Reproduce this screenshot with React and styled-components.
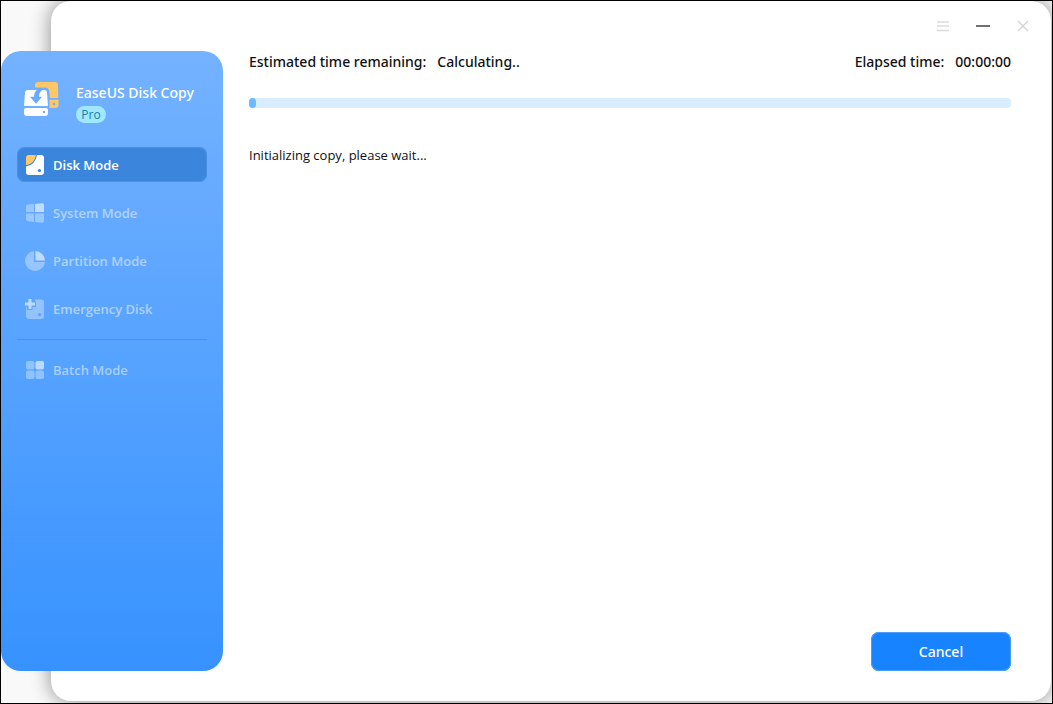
import React from "react";
import styled, { createGlobalStyle } from "styled-components";

const GlobalStyle = createGlobalStyle`
  * { box-sizing: border-box; }
  body { margin: 0; font-family: "Open Sans", "Noto Sans", sans-serif; color: #111; }
  button { font-family: inherit; border: 0; padding: 0; background: none; cursor: pointer; }
`;

const headingFont = `"Noto Sans", "Open Sans", sans-serif`;

const Desktop = styled.div`
  display: flex;
  min-height: 100vh;
  padding: 0 1px 2px 0;
  border: 1px solid #000;
  background: #f9f9f9;
  overflow: hidden;
`;

const Sidebar = styled.aside`
  position: relative;
  z-index: 1;
  flex: none;
  width: 222px;
  margin: 50px -172px 30px 0;
  padding: 30px 16px;
  border-radius: 20px;
  background: linear-gradient(#74b2ff, #3792ff);
`;

const Brand = styled.header`
  display: flex;
  gap: 16px;
  height: 66px;
  padding-left: 6px;
`;

const BrandText = styled.div`
  display: flex;
  flex-direction: column;
  align-items: flex-start;
  gap: 3px;
  padding-top: 2px;
`;

const BrandName = styled.h1`
  margin: 0;
  color: #fff;
  font-family: ${headingFont};
  font-size: 14px;
  font-weight: 500;
  line-height: 20px;
  white-space: nowrap;
`;

const Badge = styled.span`
  width: 30px;
  border-radius: 9px;
  background: #a0e8ff;
  color: #1a80aa;
  font-size: 12px;
  line-height: 17px;
  text-align: center;
`;

const Nav = styled.nav`
  display: flex;
  flex-direction: column;
  gap: 13px;
`;

const NavItem = styled.button`
  display: flex;
  align-items: center;
  gap: 7px;
  height: 35px;
  padding: 0 7px;
  border-radius: 8px;
  font-size: 13px;
  font-weight: 600;
  line-height: 18px;
  white-space: nowrap;
  color: ${(p) => (p.$active ? "#fff" : "rgba(255,255,255,0.5)")};
  background: ${(p) => (p.$active ? "#3b86dc" : "transparent")};
  box-shadow: ${(p) => (p.$active ? "inset 0 0 0 1px #4a91e6" : "none")};
`;

const Divider = styled.hr`
  width: 100%;
  height: 1px;
  margin: 0 0 -1px;
  border: 0;
  background: #4692ee;
`;

const Panel = styled.main`
  display: flex;
  flex: 1;
  flex-direction: column;
  min-width: 0;
  padding: 15px 40px 30px 198px;
  border-radius: 20px;
  background: #fff;
  box-shadow: 0 0 20px rgba(0, 0, 0, 0.45);
`;

const WindowBar = styled.div`
  display: flex;
  justify-content: flex-end;
  gap: 20px;
  margin-right: -22px;
`;

const WindowButton = styled.button`
  display: flex;
  width: 20px;
  height: 20px;
`;

const Times = styled.div`
  display: flex;
  justify-content: space-between;
  margin-top: 16px;
`;

const Time = styled.p`
  display: flex;
  gap: 11px;
  margin: 0;
  font-family: ${headingFont};
  font-size: 14px;
  font-weight: 500;
  line-height: 20px;
  white-space: nowrap;
`;

const Track = styled.div`
  height: 10px;
  margin-top: 26px;
  border-radius: 4px;
  background: #d9edff;
`;

const Fill = styled.div`
  height: 100%;
  min-width: 7px;
  border-radius: 4px;
  background: #6bb9ff;
`;

const Status = styled.p`
  margin: 37px 0 0;
  font-size: 13px;
  line-height: 20px;
`;

const Footer = styled.footer`
  display: flex;
  justify-content: flex-end;
  margin-top: auto;
`;

const CancelButton = styled.button`
  width: 140px;
  height: 39px;
  border-radius: 8px;
  box-shadow: inset 0 0 0 1px #4b9eff;
  background: #1783ff;
  color: #fff;
  font-family: ${headingFont};
  font-size: 14px;
  font-weight: 500;
`;

const Logo = () => (
  <svg width="37" height="36" viewBox="0 0 37 36" aria-hidden="true">
    <path fill="#ffc766" d="M15 1h17q3 0 3 3l.3 13H27l-.8-7q-.4-3.500-4-3.500H12V4q0-3 3-3z" />
    <path fill="#ffc766" fillRule="evenodd" d="M26.500 18.700h9V24q0 3-3 3h-6zM31 21.700a1.300 1.300 0 1 0 0 2.600a1.300 1.300 0 0 0 0-2.600z" />
    <path fill="#fff" d="M5 9h16q3 0 3 3l1 13H1l1-13q0-3 3-3z" />
    <path fill="#69acff" d="M23 7.500q-7 1.500-7 8.300h3l-6 7-6-7h4q0-6 5-8.300z" />
    <path fill="#fff" fillRule="evenodd" d="M3 27h20q2 0 2 2v3q0 3-3 3H4q-3 0-3-3v-3q0-2 2-2zM21 29.700a1.300 1.300 0 1 0 0 2.600a1.300 1.300 0 0 0 0-2.600z" />
  </svg>
);

const NavIcon = ({ children }) => (
  <svg width="22" height="22" viewBox="0 0 22 22" fill="#fff" aria-hidden="true">{children}</svg>
);

const DiskIcon = () => (
  <NavIcon>
    <path d="M13 1h4q3 0 3 3v14q0 3-3 3H5q-3 0-3-3v-5.500Q11.500 11 13 1z" />
    <path fill="#ffc766" d="M5 1h7Q10.500 10 2 11.300V4q0-3 3-3z" />
    <circle cx="15.500" cy="16.500" r="1.600" fill="#3b86dc" />
  </NavIcon>
);

const SystemIcon = () => (
  <NavIcon>
    <g opacity=".35">
      <path d="M4 2.600L10 2v8H2V4.500q0-1.700 2-1.900z" />
      <path d="M2 11.500h8v8.500l-6-.8q-2-.3-2-2z" />
      <path d="M11 11.500h9V19q0 2-2 1.800l-7-.8z" />
    </g>
    <path opacity=".6" d="M11 1.900L18 1.200q2-.2 2 1.800v7h-9z" />
  </NavIcon>
);

const PartitionIcon = () => (
  <NavIcon>
    <path opacity=".35" d="M10 1v11h11A10 10 0 1 1 10 1z" />
    <path opacity=".6" d="M11.500 1A10 10 0 0 1 21 10.500h-9.500z" />
  </NavIcon>
);

const EmergencyIcon = () => (
  <NavIcon>
    <path opacity=".35" fillRule="evenodd" d="M11 1.500h6q3 0 3 3V18q0 3-3 3H5q-3 0-3-3v-8.500h1v2.500h5.500V9h3.500V3.500h-1zM15.500 15a1.600 1.600 0 1 0 0 3.200a1.600 1.600 0 0 0 0-3.200z" />
    <path opacity=".6" d="M4.500 1h3v3.500H11v3H7.500V11h-3V7.500H1v-3h3.500z" />
  </NavIcon>
);

const BatchIcon = () => (
  <NavIcon>
    <g opacity=".35">
      <rect x="2" y="2" width="8.500" height="8.500" rx="1.800" />
      <rect x="2" y="11.500" width="8.500" height="8.500" rx="1.800" />
      <rect x="11.500" y="11.500" width="8.500" height="8.500" rx="1.800" />
    </g>
    <rect opacity=".6" x="11.500" y="2" width="8.500" height="8.500" rx="1.800" />
  </NavIcon>
);

const modes = [
  { name: "Disk Mode", Icon: DiskIcon, active: true },
  { name: "System Mode", Icon: SystemIcon },
  { name: "Partition Mode", Icon: PartitionIcon },
  { name: "Emergency Disk", Icon: EmergencyIcon },
];

const windowButtons = [
  { label: "Menu", path: "M4 6h12M4 10h12M4 14.500h12", color: "#dbdbdb", width: 1.6 },
  { label: "Minimize", path: "M3 10h14", color: "#707072", width: 2 },
  { label: "Close", path: "M5 5l10 10M15 5L5 15", color: "#d6d6d6", width: 1.5 },
];

export default function App() {
  const progress = 0;
  return (
    <Desktop>
      <GlobalStyle />
      <Sidebar>
        <Brand>
          <Logo />
          <BrandText>
            <BrandName>EaseUS Disk Copy</BrandName>
            <Badge>Pro</Badge>
          </BrandText>
        </Brand>
        <Nav>
          {modes.map(({ name, Icon, active }) => (
            <NavItem key={name} type="button" $active={active}>
              <Icon />
              {name}
            </NavItem>
          ))}
          <Divider />
          <NavItem type="button">
            <BatchIcon />
            Batch Mode
          </NavItem>
        </Nav>
      </Sidebar>
      <Panel>
        <WindowBar>
          {windowButtons.map((b) => (
            <WindowButton key={b.label} type="button" aria-label={b.label}>
              <svg width="20" height="20" viewBox="0 0 20 20" fill="none" stroke={b.color} strokeWidth={b.width}>
                <path d={b.path} />
              </svg>
            </WindowButton>
          ))}
        </WindowBar>
        <Times>
          <Time><span>Estimated time remaining:</span><span>Calculating..</span></Time>
          <Time><span>Elapsed time:</span><span>00:00:00</span></Time>
        </Times>
        <Track role="progressbar" aria-label="Copy progress" aria-valuenow={progress} aria-valuemin={0} aria-valuemax={100}>
          <Fill style={{ width: `${progress}%` }} />
        </Track>
        <Status>Initializing copy, please wait...</Status>
        <Footer>
          <CancelButton type="button">Cancel</CancelButton>
        </Footer>
      </Panel>
    </Desktop>
  );
}
